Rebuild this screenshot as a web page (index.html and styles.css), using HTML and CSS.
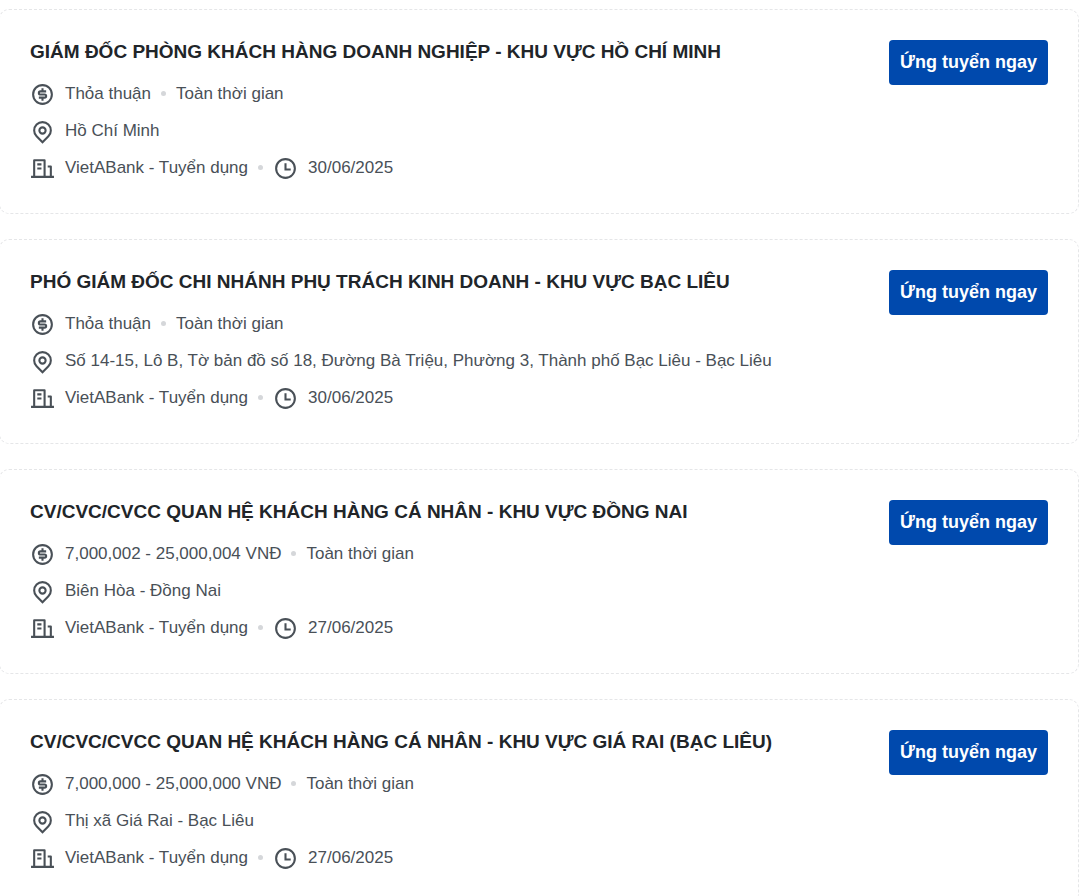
FILE: index.html
```
<!DOCTYPE html>
<html lang="vi">
<head>
<meta charset="utf-8">
<title>Tuyển dụng</title>
<link rel="stylesheet" href="styles.css">
</head>
<body>
<svg class="sprite" aria-hidden="true">
  <symbol id="salary" viewBox="0 0 24 24"><path d="M12 22C6.477 22 2 17.523 2 12S6.477 2 12 2s10 4.477 10 10-4.477 10-10 10zm0-2a8 8 0 1 0 0-16 8 8 0 0 0 0 16zm-3.500-6H14a.5.5 0 1 0 0-1h-4a2.500 2.500 0 1 1 0-5h1V6h2v2h2.500v2H10a.5.5 0 1 0 0 1h4a2.500 2.500 0 1 1 0 5h-1v2h-2v-2H8.500v-2z"/></symbol>
  <symbol id="place" viewBox="0 0 24 24"><path d="M12 20.900l4.950-4.950a7 7 0 1 0-9.900 0L12 20.900zm0 2.828l-6.364-6.364a9 9 0 1 1 12.728 0L12 23.728zM12 13a2 2 0 1 0 0-4 2 2 0 0 0 0 4zm0 2a4 4 0 1 1 0-8 4 4 0 0 1 0 8z"/></symbol>
  <symbol id="company" viewBox="0 0 24 24"><path d="M21 19h2v2H1v-2h2V4a1 1 0 0 1 1-1h10a1 1 0 0 1 1 1v15h4v-8h-2V9h3a1 1 0 0 1 1 1v9zM5 5v14h8V5H5zm2 6h4v2H7v-2zm0-4h4v2H7V7z"/></symbol>
  <symbol id="clock" viewBox="0 0 24 24"><path d="M12 22C6.477 22 2 17.523 2 12S6.477 2 12 2s10 4.477 10 10-4.477 10-10 10zm0-2a8 8 0 1 0 0-16 8 8 0 0 0 0 16zm1-8h4v2h-6V7h2v5z"/></symbol>
</svg>
<main class="jobs">
  <article class="job">
    <div class="info">
      <h2 class="title">GIÁM ĐỐC PHÒNG KHÁCH HÀNG DOANH NGHIỆP - KHU VỰC HỒ CHÍ MINH</h2>
      <p class="row"><svg class="icon"><use href="#salary"/></svg><span>Thỏa thuận</span><span class="dot"></span><span>Toàn thời gian</span></p>
      <p class="row"><svg class="icon"><use href="#place"/></svg><span>Hồ Chí Minh</span></p>
      <p class="row"><svg class="icon"><use href="#company"/></svg><span>VietABank - Tuyển dụng</span><span class="dot"></span><svg class="icon"><use href="#clock"/></svg><time datetime="2025-06-30">30/06/2025</time></p>
    </div>
    <button class="apply" type="button">Ứng tuyển ngay</button>
  </article>
  <article class="job">
    <div class="info">
      <h2 class="title">PHÓ GIÁM ĐỐC CHI NHÁNH PHỤ TRÁCH KINH DOANH - KHU VỰC BẠC LIÊU</h2>
      <p class="row"><svg class="icon"><use href="#salary"/></svg><span>Thỏa thuận</span><span class="dot"></span><span>Toàn thời gian</span></p>
      <p class="row"><svg class="icon"><use href="#place"/></svg><span>Số 14-15, Lô B, Tờ bản đồ số 18, Đường Bà Triệu, Phường 3, Thành phố Bạc Liêu - Bạc Liêu</span></p>
      <p class="row"><svg class="icon"><use href="#company"/></svg><span>VietABank - Tuyển dụng</span><span class="dot"></span><svg class="icon"><use href="#clock"/></svg><time datetime="2025-06-30">30/06/2025</time></p>
    </div>
    <button class="apply" type="button">Ứng tuyển ngay</button>
  </article>
  <article class="job">
    <div class="info">
      <h2 class="title">CV/CVC/CVCC QUAN HỆ KHÁCH HÀNG CÁ NHÂN - KHU VỰC ĐỒNG NAI</h2>
      <p class="row"><svg class="icon"><use href="#salary"/></svg><span>7,000,002 - 25,000,004 VNĐ</span><span class="dot"></span><span>Toàn thời gian</span></p>
      <p class="row"><svg class="icon"><use href="#place"/></svg><span>Biên Hòa - Đồng Nai</span></p>
      <p class="row"><svg class="icon"><use href="#company"/></svg><span>VietABank - Tuyển dụng</span><span class="dot"></span><svg class="icon"><use href="#clock"/></svg><time datetime="2025-06-27">27/06/2025</time></p>
    </div>
    <button class="apply" type="button">Ứng tuyển ngay</button>
  </article>
  <article class="job">
    <div class="info">
      <h2 class="title">CV/CVC/CVCC QUAN HỆ KHÁCH HÀNG CÁ NHÂN - KHU VỰC GIÁ RAI (BẠC LIÊU)</h2>
      <p class="row"><svg class="icon"><use href="#salary"/></svg><span>7,000,000 - 25,000,000 VNĐ</span><span class="dot"></span><span>Toàn thời gian</span></p>
      <p class="row"><svg class="icon"><use href="#place"/></svg><span>Thị xã Giá Rai - Bạc Liêu</span></p>
      <p class="row"><svg class="icon"><use href="#company"/></svg><span>VietABank - Tuyển dụng</span><span class="dot"></span><svg class="icon"><use href="#clock"/></svg><time datetime="2025-06-27">27/06/2025</time></p>
    </div>
    <button class="apply" type="button">Ứng tuyển ngay</button>
  </article>
</main>
</body>
</html>
```
FILE: styles.css
```
* { box-sizing: border-box; }
body { margin: 0; background: #fff; color: #495057; font: 17px/27px "Liberation Sans", Arial, sans-serif; }
.sprite { position: absolute; width: 0; height: 0; }
.jobs { display: flex; flex-direction: column; gap: 25px; margin-left: -1px; padding: 9px 8px 0 0; }
.job { display: flex; justify-content: space-between; align-items: flex-start; gap: 24px; padding: 30px 30px 32px; border: 1px dashed #e5e6e8; border-radius: 10px; }
.info { min-width: 0; }
.title { margin: 0 0 16px; color: #212529; font-size: 19px; line-height: 24px; font-weight: 700; }
.row { display: flex; align-items: center; margin: 0 0 10px; }
.row:last-child { margin-bottom: 0; }
.icon { flex: none; width: 25px; height: 25px; margin: 2px 10px 0 0; fill: #495057; }
.dot { flex: none; width: 5px; height: 5px; margin: 0 10px; border-radius: 50%; background: #d5d7da; }
.apply { flex: none; padding: 9px 11px; border: 0; border-radius: 4px; background: #0049ad; color: #fff; font: 700 18px/27px "Liberation Sans", Arial, sans-serif; }
```
